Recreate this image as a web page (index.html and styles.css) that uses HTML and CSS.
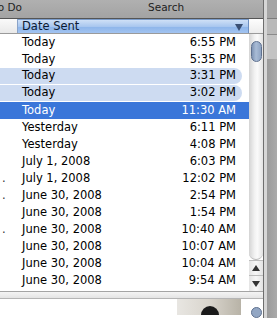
FILE: index.html
```html
<!DOCTYPE html>
<html>
<head>
<meta charset="utf-8">
<link rel="stylesheet" href="styles.css">
</head>
<body>
<div class="screen">
  <div class="main">
    <div class="toolbar">
      <span class="todo">To Do</span>
      <span class="search">Search</span>
    </div>
    <div class="list-area">
      <div class="table">
        <div class="header">
          <div class="h-left"></div>
          <div class="h-date">Date Sent<span class="tri"></span></div>
        </div>
        <div class="rows">
          <div class="row"><span class="mark"></span><span class="date">Today</span><span class="time">6:55 PM</span></div>
          <div class="row"><span class="mark"></span><span class="date">Today</span><span class="time">5:35 PM</span></div>
          <div class="row soft"><span class="mark"></span><span class="date">Today</span><span class="time">3:31 PM</span></div>
          <div class="row soft"><span class="mark"></span><span class="date">Today</span><span class="time">3:02 PM</span></div>
          <div class="row sel"><span class="mark"></span><span class="date">Today</span><span class="time">11:30 AM</span></div>
          <div class="row"><span class="mark"></span><span class="date">Yesterday</span><span class="time">6:11 PM</span></div>
          <div class="row"><span class="mark"></span><span class="date">Yesterday</span><span class="time">4:08 PM</span></div>
          <div class="row"><span class="mark"></span><span class="date">July 1, 2008</span><span class="time">6:03 PM</span></div>
          <div class="row"><span class="mark">.</span><span class="date">July 1, 2008</span><span class="time">12:02 PM</span></div>
          <div class="row"><span class="mark">.</span><span class="date">June 30, 2008</span><span class="time">2:54 PM</span></div>
          <div class="row"><span class="mark"></span><span class="date">June 30, 2008</span><span class="time">1:54 PM</span></div>
          <div class="row"><span class="mark">.</span><span class="date">June 30, 2008</span><span class="time">10:40 AM</span></div>
          <div class="row"><span class="mark"></span><span class="date">June 30, 2008</span><span class="time">10:07 AM</span></div>
          <div class="row"><span class="mark"></span><span class="date">June 30, 2008</span><span class="time">10:04 AM</span></div>
          <div class="row"><span class="mark"></span><span class="date">June 30, 2008</span><span class="time">9:54 AM</span></div>
          <div class="row"><span class="mark"></span><span class="date">June 30, 2008</span><span class="time">4:55 PM</span></div>
        </div>
      </div>
      <div class="vscroll">
        <div class="corner"></div>
        <div class="track">
          <div class="thumb"></div>
        </div>
        <div class="arrow up"><span></span></div>
        <div class="arrow down"><span></span></div>
      </div>
    </div>
    <div class="splitter"></div>
    <div class="preview">
      <div class="photo"><span class="blob"></span></div>
      <div class="knob"></div>
    </div>
  </div>
  <div class="side">
    <div class="side-a"></div>
    <div class="side-b"></div>
    <div class="side-c"></div>
    <div class="side-d"></div>
  </div>
</div>
</body>
</html>
```
FILE: styles.css
```css
html, body {
  margin: 0;
  padding: 0;
}
body {
  width: 277px;
  height: 318px;
  overflow: hidden;
  background: #fff;
  font-family: "DejaVu Sans", "Liberation Sans", sans-serif;
  font-size: 11.5px;
  color: #000;
}
.screen {
  display: flex;
  width: 277px;
  height: 318px;
}
.main {
  width: 263px;
  display: flex;
  flex-direction: column;
  border-right: 1px solid #6e6e6e;
}
.toolbar {
  height: 18px;
  background: linear-gradient(#b0b0b0, #a3a3a3);
  border-bottom: 1px solid #555;
  position: relative;
  font-size: 10.5px;
  color: #1e1e1e;
  line-height: 15px;
}
.todo {
  position: absolute;
  left: -7px;
  top: 0;
}
.search {
  position: absolute;
  left: 148px;
  top: 0;
}
.list-area {
  display: flex;
  height: 276px;
  overflow: hidden;
}
.table {
  width: 249px;
  display: flex;
  flex-direction: column;
}
.header {
  display: flex;
  height: 14px;
  border-bottom: 1px solid #9a9a9a;
}
.h-left {
  width: 17px;
  background: linear-gradient(#fafafa, #e9e9e9);
  border-right: 1px solid #8aa3c8;
}
.h-date {
  flex: 1;
  background: linear-gradient(#cfe0f6 0%, #a9c7ef 50%, #8db5ea 51%, #a2c3f0 100%);
  border-top: 1px solid #7a9bc9;
  border-right: 1px solid #6e8fc0;
  padding-left: 4px;
  line-height: 13px;
  font-size: 11.5px;
  color: #0c1a33;
  position: relative;
}
.tri {
  position: absolute;
  right: 5px;
  top: 4px;
  width: 0;
  height: 0;
  border-left: 4px solid transparent;
  border-right: 4px solid transparent;
  border-top: 7px solid #3a4f73;
}
.rows {
  flex: 1;
  overflow: hidden;
}
.row {
  display: flex;
  height: 17px;
  line-height: 17px;
  align-items: center;
}
.mark {
  width: 18px;
  padding-left: 2px;
  box-sizing: border-box;
  color: #333;
}
.date {
  flex: 1;
  padding-left: 4px;
}
.time {
  padding-right: 13px;
  text-align: right;
}
.row.soft {
  background: #cddbf1;
  height: 16px;
  margin-bottom: 1px;
  margin-right: 7px;
  border-radius: 0 8px 8px 0;
}
.row.soft .time {
  padding-right: 6px;
}
.row.sel {
  background: #3a76d9;
  color: #fff;
}
.vscroll {
  width: 14px;
  display: flex;
  flex-direction: column;
}
.corner {
  height: 14px;
  border-bottom: 1px solid #9a9a9a;
  background: linear-gradient(#fdfdfd, #ececec);
}
.track {
  height: 230px;
  background: linear-gradient(90deg, #d4d4d4, #f2f2f2 40%, #fafafa 60%, #e2e2e2);
  border-radius: 0 0 7px 7px;
  border-bottom: 1px solid #b8b8b8;
  box-sizing: border-box;
  padding-top: 7px;
  display: flex;
  justify-content: center;
}
.thumb {
  width: 11px;
  height: 21px;
  border-radius: 6px;
  background: linear-gradient(90deg, #7f94b4, #a9bcd6 45%, #8ea3c2);
  border: 1px solid #5f718f;
  box-sizing: border-box;
}
.arrow {
  height: 15px;
  border-top: 1px solid #bcbcbc;
  background: linear-gradient(90deg, #e4e4e4, #f7f7f7 50%, #e2e2e2);
  display: flex;
  align-items: center;
  justify-content: center;
}
.arrow span {
  width: 0;
  height: 0;
  border-left: 4px solid transparent;
  border-right: 4px solid transparent;
}
.arrow.up span {
  border-bottom: 6px solid #333;
}
.arrow.down span {
  border-top: 6px solid #333;
}
.splitter {
  height: 6px;
  border-top: 1px solid #a4a4a4;
  border-bottom: 1px solid #b5b5b5;
  background: linear-gradient(#f4f4f4, #e4e4e4);
}
.preview {
  flex: 1;
  display: flex;
  align-items: flex-start;
  justify-content: flex-end;
  background: #fff;
}
.photo {
  width: 64px;
  height: 16px;
  background: linear-gradient(90deg, #e8e6e2, #d9d5cd 50%, #b8b3a7);
  position: relative;
  margin-right: 10px;
  overflow: hidden;
}
.blob {
  position: absolute;
  left: 24px;
  top: 7px;
  width: 18px;
  height: 14px;
  background: #1a1a1a;
  border-radius: 9px 9px 0 0;
}
.knob {
  width: 11px;
  height: 11px;
  margin-top: 8px;
  margin-right: 1px;
  border-radius: 6px;
  background: #93a7c4;
  border: 1px solid #5f718f;
  box-sizing: border-box;
}
.side {
  width: 13px;
  display: flex;
  flex-direction: column;
  background: #a2a2a2;
  border-left: 3px solid #d6d6d6;
}
.side-a {
  height: 18px;
  background: #a5a5a5;
  border-bottom: 1px solid #7c7c7c;
}
.side-b {
  height: 15px;
  background: #b9b9b9;
  border-bottom: 1px solid #8a8a8a;
}
.side-c {
  height: 24px;
  background: #c3c3c3;
}
.side-d {
  flex: 1;
  background: linear-gradient(90deg, #9a9a9a, #aaaaaa);
}
```
